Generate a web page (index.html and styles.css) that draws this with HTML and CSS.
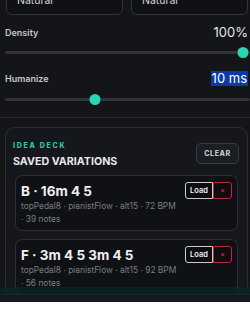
FILE: index.html
```html
<!DOCTYPE html>
<html>
<head>
<meta charset="utf-8">
<link rel="stylesheet" href="styles.css">
</head>
<body>
<div class="panel">
  <div class="selects">
    <div class="select">Natural</div>
    <div class="select">Natural</div>
  </div>
  <div class="field-row density-row">
    <span class="label">Density</span>
    <span class="value">100%</span>
  </div>
  <div class="slider"><div class="track"></div><div class="thumb" style="left: 98%"></div></div>
  <div class="field-row humanize-row">
    <span class="label">Humanize</span>
    <span class="value selected">10 ms</span>
  </div>
  <div class="slider"><div class="track"></div><div class="thumb" style="left: 37%"></div></div>
  <div class="divider"></div>
  <section class="deck">
    <header class="deck-head">
      <div>
        <div class="eyebrow">IDEA DECK</div>
        <h2 class="deck-title">SAVED VARIATIONS</h2>
      </div>
      <button class="clear">CLEAR</button>
    </header>
    <div class="items">
      <div class="item">
        <div class="item-text">
          <div class="item-title">B · 16m 4 5</div>
          <div class="item-meta">topPedal8 · pianistFlow · alt15 · 72 BPM<br>· 39 notes</div>
        </div>
        <div class="actions"><button class="load">Load</button><button class="del">×</button></div>
      </div>
      <div class="item">
        <div class="item-text">
          <div class="item-title">F · 3m 4 5 3m 4 5</div>
          <div class="item-meta">topPedal8 · pianistFlow · alt15 · 92 BPM<br>· 56 notes</div>
        </div>
        <div class="actions"><button class="load">Load</button><button class="del">×</button></div>
      </div>
    </div>
  </section>
  <div class="footer"><div class="fade"></div><div class="bar"></div></div>
</div>
</body>
</html>
```
FILE: styles.css
```css
* { box-sizing: border-box; }
html, body { margin: 0; padding: 0; background: #ffffff; }
body { font-family: Inter, "Noto Sans", sans-serif; }

.panel {
  position: relative;
  height: 302px;
  overflow: hidden;
  background: #131519;
  padding: 0 2px 0 5px;
}

.selects {
  display: grid;
  grid-template-columns: 1fr 1fr;
  gap: 8px;
  margin-top: -13px;
  padding-left: 1px;
}
.select {
  height: 28px;
  border: 1px solid #30333a;
  border-radius: 6px;
  background: #0f1114;
  color: #d3d5d9;
  font-size: 10.5px;
  line-height: 12px;
  padding: 7px 0 0 10px;
}

.field-row {
  display: flex;
  justify-content: space-between;
  align-items: center;
}
.density-row { margin-top: 10px; height: 15px; }
.humanize-row { margin-top: 12px; height: 16px; }
.label { color: #c5c7cc; font-size: 9px; font-weight: 600; }
.value { color: #e4e6e9; font-size: 13px; line-height: 15px; }
.selected { background: #0a3aa6; color: #ffffff; padding: 0 1px 0 1px; }

.slider { position: relative; height: 11px; margin-top: 7px; }
.humanize-row + .slider { margin-top: 8px; }
.track {
  position: absolute; left: 0; right: -2px; top: 4px;
  height: 3px; border-radius: 2px; background: #2f3339;
}
.thumb {
  position: absolute; top: 0;
  width: 11px; height: 11px; border-radius: 50%;
  background: #2dd4b1;
  transform: translateX(-50%);
}

.divider { height: 1px; background: #25282e; margin: 12px -2px 0 -5px; }

.deck {
  margin-top: 9px;
  border: 1px solid #2a2d34;
  border-radius: 9px;
  background: #15171c;
  padding: 14px 8px 0 7px;
}
.deck-head { display: flex; justify-content: space-between; align-items: flex-start; }
.eyebrow {
  color: #2bc7a6; font-size: 7px; font-weight: 800; letter-spacing: 1.7px;
  line-height: 8px;
}
.deck-title {
  margin: 6px 0 0; color: #e8e9eb; font-size: 10.7px; font-weight: 700; line-height: 12px;
}
.clear {
  margin-top: 1px;
  width: 43px; height: 21px;
  border: 1px solid #393c43; border-radius: 5px;
  background: #1b1e23; color: #c4c6cb;
  font: 800 7px Inter, sans-serif; letter-spacing: 0.6px;
  padding: 0;
}

.items { padding: 7px 1px 0 2px; display: flex; flex-direction: column; gap: 8px; }
.item {
  display: flex; justify-content: space-between; align-items: flex-start;
  border: 1px solid #2c2f36; border-radius: 7px;
  background: #0f1114;
  padding: 7px 5px 4px 5px;
}
.item-title { color: #f0f0f2; font-size: 13.5px; font-weight: 700; line-height: 16px; }
.item-meta { color: #7a7e87; font-size: 8.4px; line-height: 13px; margin-top: 1px; }

.actions { display: flex; margin-top: -1px; }
.load {
  width: 28px; height: 17px;
  border: 1px solid #c9cbcf; border-radius: 3px 0 0 3px;
  background: #0c0d10; color: #f0f0f2;
  font: 600 7.5px Inter, sans-serif; padding: 0;
}
.del {
  width: 19px; height: 17px;
  border: 1px solid #c02438; border-radius: 0 3px 3px 0;
  background: #0c0d10; color: #d0283d;
  font: 600 7px Inter, sans-serif; padding: 0;
}

.footer { position: absolute; left: 0; right: 0; bottom: 0; }
.fade { height: 7px; background: rgba(8, 40, 38, 0.75); }
.bar { height: 8px; background: #15181c; border-top: 1px solid #1f2328; }
```
